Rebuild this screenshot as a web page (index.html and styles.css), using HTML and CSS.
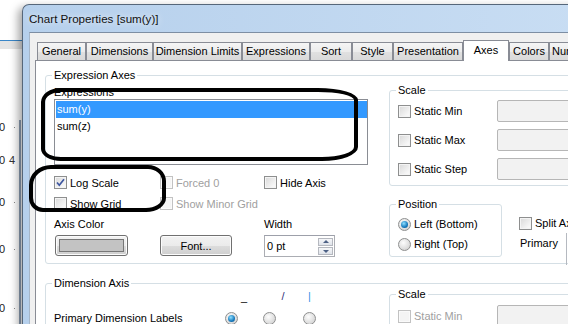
FILE: index.html
```html
<!DOCTYPE html>
<html>
<head>
<meta charset="utf-8">
<link rel="stylesheet" href="styles.css">
</head>
<body>
<div class="screen">
  <div class="bgapp">
    <div class="bg-top"></div>
    <div class="bg-band"></div>
    <div class="bg-axis">
      <div class="axis-labels">
        <div class="axis-label l1"><span>0</span><span class="dot"></span></div>
        <div class="axis-label l2"><span>0</span><span class="four">4</span></div>
        <div class="axis-label l3"><span>0</span><span class="dot"></span></div>
        <div class="axis-label l4"><span>0</span><span class="dot"></span></div>
        <div class="axis-label l5"><span>0</span><span class="dot"></span></div>
      </div>
      <div class="axis-line"></div>
    </div>
  </div>

  <div class="dialog">
    <div class="titlebar">Chart Properties [sum(y)]</div>
    <div class="client">
      <div class="tabs">
        <div class="tab t-general">General</div>
        <div class="tab t-dims">Dimensions</div>
        <div class="tab t-limits">Dimension Limits</div>
        <div class="tab t-expr">Expressions</div>
        <div class="tab t-sort">Sort</div>
        <div class="tab t-style">Style</div>
        <div class="tab t-pres">Presentation</div>
        <div class="tab sel t-axes">Axes</div>
        <div class="tab t-colors">Colors</div>
        <div class="tab t-num">Number</div>
      </div>
      <div class="panel">
        <div class="group exp-group">
          <div class="group-title">Expression Axes</div>
          <div class="exp-body">
            <div class="left-col">
              <div class="field-label first">Expressions</div>
              <div class="listbox">
                <div class="list-item selected">sum(y)</div>
                <div class="list-item">sum(z)</div>
              </div>
              <div class="opts">
                <label class="check"><span class="cb"><svg viewBox="0 0 11 11" width="11" height="11"><path d="M2 5.5 L4.3 8.2 L9 2.2" fill="none" stroke="#3d56a0" stroke-width="1.7"/></svg></span>Log Scale</label>
                <label class="check disabled"><span class="cb"></span>Forced 0</label>
                <label class="check"><span class="cb"></span>Hide Axis</label>
                <label class="check"><span class="cb"></span>Show Grid</label>
                <label class="check disabled"><span class="cb"></span>Show Minor Grid</label>
                <div></div>
                <div class="field-label mid">Axis Color</div>
                <div></div>
                <div class="field-label mid">Width</div>
                <div class="btn color-btn"><span class="swatch"></span></div>
                <div class="btn font-btn">Font...</div>
                <div class="spin"><span class="spin-text">0 pt</span><span class="spin-btns"><span class="sb up"></span><span class="sb down"></span></span></div>
              </div>
            </div>
            <div class="right-col">
              <div class="group scale-group">
                <div class="group-title">Scale</div>
                <div class="scale-rows">
                  <div class="scale-row"><label class="check"><span class="cb"></span>Static Min</label><span class="textbox"></span></div>
                  <div class="scale-row"><label class="check"><span class="cb"></span>Static Max</label><span class="textbox"></span></div>
                  <div class="scale-row"><label class="check"><span class="cb"></span>Static Step</label><span class="textbox"></span></div>
                </div>
              </div>
              <div class="pos-row">
                <div class="group pos-group">
                  <div class="group-title">Position</div>
                  <div class="radio-rows">
                    <label class="radio-row"><span class="rb on"></span>Left (Bottom)</label>
                    <label class="radio-row"><span class="rb"></span>Right (Top)</label>
                  </div>
                </div>
                <div class="split-col">
                  <label class="check row20"><span class="cb"></span>Split Axis</label>
                  <div class="primary-row"><span class="primary">Primary</span><span class="combo"></span></div>
                </div>
              </div>
            </div>
          </div>
        </div>

        <div class="group dim-group">
          <div class="group-title">Dimension Axis</div>
          <div class="dim-body">
            <div class="dim-left">
              <div></div>
              <div class="sym s-flat">_</div>
              <div class="sym s-diag">/</div>
              <div class="sym s-vert">|</div>
              <div class="field-label mid">Primary Dimension Labels</div>
              <div class="rcell"><span class="rb on"></span></div>
              <div class="rcell"><span class="rb"></span></div>
              <div class="rcell"><span class="rb"></span></div>
            </div>
            <div class="group scale-group dim-scale">
              <div class="group-title">Scale</div>
              <div class="scale-rows">
                <div class="scale-row"><label class="check disabled"><span class="cb"></span>Static Min</label><span class="textbox"></span></div>
              </div>
            </div>
          </div>
        </div>
      </div>
    </div>
  </div>

  <div class="mark mark-1"></div>
  <div class="mark mark-2"></div>
</div>
</body>
</html>
```

FILE: styles.css
```css
html, body {
  margin: 0;
  padding: 0;
}
body {
  width: 568px;
  height: 324px;
  overflow: hidden;
  background: #fff;
  font-family: "Liberation Sans", Arial, sans-serif;
  font-size: 11px;
  color: #000;
}
.screen {
  position: relative;
  width: 568px;
  height: 324px;
  overflow: hidden;
}

/* background application */
.bgapp {
  width: 22px;
  height: 324px;
  display: flex;
  flex-direction: column;
}
.bg-top {
  height: 40px;
  border-bottom: 1px solid #3a86c8;
}
.bg-band {
  height: 8px;
  background: #e4e4e4;
}
.bg-axis {
  flex: 1;
  display: flex;
}
.axis-labels {
  width: 19px;
  display: flex;
  flex-direction: column;
}
.axis-label {
  height: 12px;
  line-height: 12px;
  display: flex;
  align-items: center;
  justify-content: space-between;
  margin-left: -1px;
  padding-right: 4px;
  color: #222;
}
.axis-label .dot {
  width: 1px;
  height: 1px;
  background: #888;
}
.axis-label .four { color: #333; }
.l1 { margin-top: 72px; }
.l2 { margin-top: 21px; }
.l3 { margin-top: 30px; }
.l4 { margin-top: 35px; }
.l5 { margin-top: 47px; }
.axis-line {
  width: 2px;
  margin-top: 71px;
  background: #8d9fb5;
}

/* dialog window */
.dialog {
  position: absolute;
  left: 22px;
  top: 4px;
  width: 560px;
  height: 330px;
  box-sizing: border-box;
  border: 1px solid #56677a;
  border-right: none;
  border-bottom: none;
  border-radius: 7px 0 0 0;
  background: linear-gradient(to right, #b6d0ec, #c8ddf3);
  padding-left: 6px;
  box-shadow: -4px 3px 9px rgba(0, 0, 0, 0.35);
  display: flex;
  flex-direction: column;
}
.titlebar {
  height: 27px;
  line-height: 27px;
  font-size: 11.6px;
  color: #111;
  text-shadow: 0 0 6px rgba(255, 255, 255, 0.9);
}
.client {
  flex: 1;
  background: #f0f0f0;
  border-top: 1px solid #7d8ea3;
  border-left: 1px solid #a6b6c8;
  padding: 7px 0 0 5px;
  display: flex;
  flex-direction: column;
}

/* tabs */
.tabs {
  display: flex;
  align-items: flex-end;
  height: 20px;
  padding-left: 2px;
  position: relative;
  z-index: 1;
}
.tab {
  flex: none;
  height: 18px;
  box-sizing: border-box;
  border: 1px solid #898c95;
  border-bottom: none;
  background: linear-gradient(#f5f5f5, #ececec 50%, #e1e1e1 51%, #d9d9d9);
  text-align: center;
  line-height: 17px;
  white-space: nowrap;
  overflow: hidden;
}
.tab.sel {
  height: 21px;
  margin-bottom: -1px;
  background: #fff;
  line-height: 18px;
}
.t-general { width: 49px; }
.t-dims { width: 67px; }
.t-limits { width: 89px; }
.t-expr { width: 68px; }
.t-sort { width: 42px; }
.t-style { width: 41px; }
.t-pres { width: 70px; }
.t-axes { width: 46px; }
.t-colors { width: 40px; }
.t-num { width: 40px; text-align: left; padding-left: 2px; }

.panel {
  flex: 1;
  background: #fff;
  border-top: 1px solid #898c95;
  border-left: 1px solid #898c95;
  padding: 14px 0 0 9px;
}

/* group boxes */
.group {
  border: 1px solid #d5dfe5;
  border-radius: 3px;
  box-sizing: border-box;
  display: flex;
  flex-direction: column;
}
.group-title {
  margin: -7px 0 0 6px;
  padding: 0 2px;
  background: #fff;
  width: fit-content;
  height: 13px;
  line-height: 13px;
  white-space: nowrap;
}
.exp-group {
  width: 540px;
  height: 189px;
}
.exp-body {
  display: flex;
  padding-left: 8px;
}
.left-col {
  width: 314px;
  flex: none;
}
.field-label {
  line-height: 13px;
  white-space: nowrap;
}
.field-label.first { margin-top: 4px; }
.field-label.mid { align-self: center; }

.listbox {
  height: 66px;
  box-sizing: border-box;
  border: 1px solid #8a8d94;
  padding: 1px 0 0 1px;
}
.list-item {
  height: 17px;
  line-height: 17px;
  padding-left: 1px;
}
.list-item.selected {
  background: #3399ff;
  color: #fff;
}

.opts {
  margin-top: 7px;
  display: grid;
  grid-template-columns: 106px 104px 104px;
  grid-template-rows: 21px 21px 21px 22px;
}

/* checkboxes */
.check {
  display: flex;
  align-items: center;
  gap: 3px;
  white-space: nowrap;
}
.cb {
  flex: none;
  width: 13px;
  height: 13px;
  box-sizing: border-box;
  border: 1px solid #8e8f8f;
  background: linear-gradient(135deg, #d8d8d8, #f7f7f7 80%);
  box-shadow: inset 0 0 0 1px #f4f4f4;
  display: flex;
  align-items: center;
  justify-content: center;
}
.check.disabled { color: #a0a0a0; }
.check.disabled .cb {
  border-color: #c2c2c2;
  background: #f4f4f4;
  box-shadow: inset 0 0 0 1px #fafafa;
}

/* buttons */
.btn {
  box-sizing: border-box;
  height: 21px;
  border: 1px solid #707070;
  border-radius: 3px;
  background: linear-gradient(#f2f2f2, #ebebeb 50%, #dddddd 51%, #cfcfcf);
  box-shadow: inset 0 0 0 1px #fcfcfc;
  display: flex;
  align-items: center;
  justify-content: center;
}
.color-btn {
  width: 73px;
  margin-left: 1px;
}
.swatch {
  width: 63px;
  height: 11px;
  border: 1px solid #777;
  background: #c3c3c3;
}
.font-btn { width: 72px; }

.spin {
  box-sizing: border-box;
  width: 71px;
  height: 22px;
  border: 1px solid #abadb3;
  border-top-color: #9da0aa;
  display: flex;
  align-items: center;
  justify-content: space-between;
  padding: 0 1px 0 2px;
  background: #fff;
}
.spin-btns {
  display: flex;
  flex-direction: column;
  gap: 1px;
}
.sb {
  width: 15px;
  height: 8px;
  box-sizing: border-box;
  border: 1px solid #b5b8bf;
  background: linear-gradient(#f6f7f9, #dfe3ea);
  position: relative;
}
.sb::after {
  content: "";
  position: absolute;
  left: 4px;
  border-left: 3px solid transparent;
  border-right: 3px solid transparent;
}
.sb.up::after { top: 1px; border-bottom: 3px solid #4d6185; }
.sb.down::after { top: 2px; border-top: 3px solid #4d6185; }

/* right column */
.right-col {
  margin-left: 21px;
  display: flex;
  flex-direction: column;
}
.scale-group {
  width: 200px;
  height: 96px;
  margin-top: 8px;
}
.scale-rows {
  margin-top: 3px;
  padding-left: 8px;
  display: flex;
  flex-direction: column;
  gap: 7px;
}
.scale-row {
  height: 22px;
  display: grid;
  grid-template-columns: 99px 90px;
  align-items: center;
}
.textbox {
  height: 22px;
  box-sizing: border-box;
  border: 1px solid #b6b6b6;
  border-radius: 2px;
  background: #f2f2f2;
}

.pos-row {
  display: flex;
  margin-top: 18px;
}
.pos-group {
  width: 113px;
  height: 53px;
}
.radio-rows {
  margin-top: 3px;
  padding-left: 8px;
}
.radio-row {
  height: 20px;
  display: flex;
  align-items: center;
  gap: 3px;
  white-space: nowrap;
}
.rb {
  flex: none;
  width: 13px;
  height: 13px;
  box-sizing: border-box;
  border: 1px solid #8e8f8f;
  border-radius: 50%;
  background: radial-gradient(circle at 40% 35%, #fdfdfd, #d6d6d6 75%);
  display: flex;
  align-items: center;
  justify-content: center;
}
.rb.on::after {
  content: "";
  width: 7px;
  height: 7px;
  border-radius: 50%;
  background: radial-gradient(circle at 40% 35%, #8fe0ff, #1679bd 60%, #0b4f80);
}
.split-col {
  margin-left: 17px;
  padding-top: 9px;
}
.row20 { height: 20px; }
.primary-row {
  height: 20px;
  display: flex;
  align-items: center;
}
.primary {
  width: 46px;
  padding-left: 1px;
}
.combo {
  width: 40px;
  height: 32px;
  margin-top: 12px;
  border-left: 1px solid #b5b9c0;
}

/* dimension axis */
.dim-group {
  width: 540px;
  height: 80px;
  margin-top: 19px;
}
.dim-body {
  display: flex;
  padding-left: 8px;
}
.dim-left {
  width: 314px;
  flex: none;
  display: grid;
  grid-template-columns: 171px 38px 40px 13px;
  grid-template-rows: 12px 20px;
  row-gap: 6px;
}
.sym {
  text-align: center;
  line-height: 12px;
  font-size: 11px;
}
.s-flat { color: #000; margin-top: 1px; }
.s-diag { color: #32327a; }
.s-vert { color: #3a8fe6; }
.rcell {
  display: flex;
  align-items: center;
}
.dim-scale {
  margin-left: 21px;
  margin-top: 4px;
  height: 60px;
}
.dim-scale .scale-rows { margin-top: 4px; }

/* hand-drawn annotation marks */
.mark {
  position: absolute;
  box-sizing: border-box;
  border: 4px solid #000;
}
.mark-1 {
  left: 41px;
  top: 88px;
  width: 317px;
  height: 73px;
  border-radius: 20px 40px 36px 20px / 14px 12px 14px 12px;
}
.mark-2 {
  left: 29px;
  top: 165px;
  width: 137px;
  height: 47px;
  border-radius: 22px 18px 20px 14px / 20px 16px 14px 14px;
}
```
